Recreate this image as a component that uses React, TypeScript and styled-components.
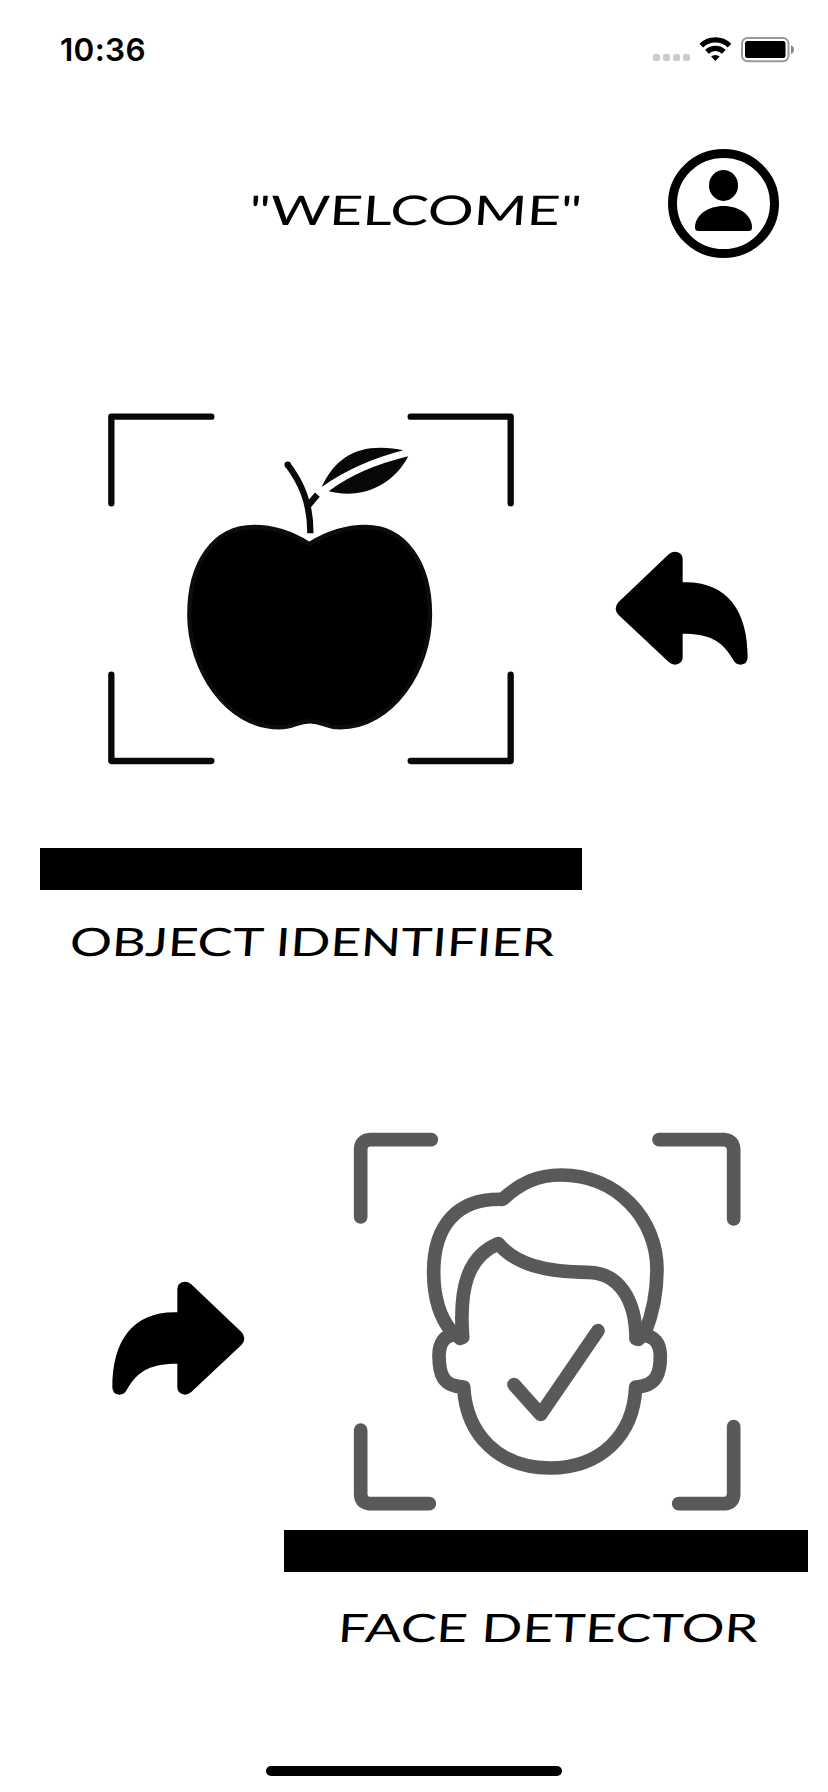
import React from "react";
import styled, { createGlobalStyle } from "styled-components";

const GlobalStyle = createGlobalStyle`
  * { box-sizing: border-box; }
  body { margin: 0; background: #fff; color: #000; }
`;

const Screen = styled.div`
  width: 828px;
  height: 1792px;
  display: flex;
  flex-direction: column;
  overflow: hidden;
  background: #fff;
`;

const StatusBar = styled.header`
  height: 88px;
  flex: none;
  display: flex;
  justify-content: space-between;
  align-items: flex-start;
  padding: 30px 33px 0 60px;
`;

const Clock = styled.time`
  font: 600 31.5px/40px Inter, sans-serif;
  letter-spacing: 0.3px;
`;

const Indicators = styled.svg`
  display: block;
  width: 145px;
  height: 40px;
`;

const TitleRow = styled.div`
  flex: none;
  height: 302px;
  padding: 60px 48px 0 249px;
  display: flex;
  justify-content: space-between;
  align-items: flex-start;
`;

const Handwritten = styled.span<{ $size: number; $stretch: number }>`
  display: block;
  width: max-content;
  font-family: "Bradley Hand", Lato, sans-serif;
  font-weight: 400;
  font-size: ${(p) => p.$size}px;
  line-height: 48px;
  white-space: nowrap;
  transform: scaleX(${(p) => p.$stretch}) skewX(-3deg);
  transform-origin: left center;
`;

const Title = styled.h1`
  margin: 38px 0 0;
`;

const ProfileButton = styled.button`
  border: 0;
  padding: 0;
  margin: 0;
  background: none;
  width: 113px;
  height: 111px;
`;

const Drawing = styled.svg<{ $w: number; $h: number }>`
  display: block;
  flex: none;
  width: ${(p) => p.$w}px;
  height: ${(p) => p.$h}px;
`;

const ObjectSection = styled.section`
  flex: none;
  height: 720px;
`;

const FaceSection = styled.section`
  flex: none;
  height: 656px;
`;

const FeatureRow = styled.div<{ $left: number; $gap: number; $height: number }>`
  display: flex;
  align-items: flex-start;
  height: ${(p) => p.$height}px;
  padding-left: ${(p) => p.$left}px;
  gap: ${(p) => p.$gap}px;
`;

const ArrowSlot = styled.div<{ $top: number }>`
  margin-top: ${(p) => p.$top}px;
`;

const Band = styled.div<{ $left: number; $width: number }>`
  height: 42px;
  width: ${(p) => p.$width}px;
  margin-left: ${(p) => p.$left}px;
  background: #000;
`;

const Caption = styled.h2<{ $left: number; $top: number }>`
  margin: ${(p) => p.$top}px 0 0 ${(p) => p.$left}px;
`;

const HomeIndicator = styled.div`
  width: 296px;
  height: 10px;
  border-radius: 5px;
  background: #000;
  align-self: center;
`;

const StatusIcons = () => (
  <Indicators viewBox="650 30 145 40">
    {[653, 663, 673, 683].map((x) => (
      <rect key={x} x={x} y="54" width="7" height="7" rx="2" fill="#cbcbcb" />
    ))}
    <g fill="none" stroke="#000" strokeWidth="5.2">
      <path d="M701.3 45.6a20.2 20.2 0 0 1 28.2 0" />
      <path d="M707 51.9a12 12 0 0 1 16.8 0" />
    </g>
    <path d="M715.4 61l-4.3-4.4a6.3 6.3 0 0 1 8.6 0z" />
    <rect x="742" y="38" width="46.5" height="23.2" rx="5.5" fill="none" stroke="#999" strokeWidth="2" />
    <rect x="745" y="41" width="40.5" height="17" rx="2.5" />
    <path d="M791 45.2c4 1.3 4 7.5 0 8.8z" fill="#888" />
  </Indicators>
);

const ProfileIcon = () => (
  <Drawing $w={113} $h={111} viewBox="667 148 113 111">
    <ellipse cx="723.5" cy="203.5" rx="51" ry="50" fill="none" stroke="#000" strokeWidth="9" />
    <ellipse cx="723.5" cy="185.4" rx="14.5" ry="15.5" />
    <path d="M695 227.5C695 215 708 206 723.5 206S752 215 752 227.5Q752 231 748.5 231H698.5Q695 231 695 227.5z" />
  </Drawing>
);

const AppleIcon = () => (
  <Drawing $w={440} $h={390} viewBox="0 0 1320 1170">
    <g fill="none" stroke="#080808" strokeWidth="19" strokeLinecap="round" strokeLinejoin="round">
      <path d="M64 340V80H364M962 80H1262V340M64 854V1113H364M962 1113H1262V854" />
    </g>
    <g fill="none" stroke="#080808" strokeWidth="19">
      <path d="M593 224C632 276 662 338 661 430" />
      <path d="M655 346L682 314" />
    </g>
    <circle cx="593" cy="224" r="9.5" />
    <path d="M695 291C732 212 787 173 872 173Q910 173 940 181Q800 217 695 291z" fill="#080808" />
    <path d="M716 304Q808 234 955 199C909 286 815 330 716 304z" fill="#080808" />
    <path
      d="M658 462C603 428 549 411 493 411C370 411 298 520 298 674C298 838 410 1012 567 1012C612 1012 620 994 660 994C700 994 704 1012 750 1012C907 1012 1020 838 1020 674C1020 520 945 411 826 411C769 411 714 428 658 462z"
      stroke="#0c0c0c"
      strokeWidth="13"
      strokeLinejoin="round"
    />
  </Drawing>
);

const FaceIcon = () => (
  <Drawing $w={420} $h={420} viewBox="0 0 1260 1260">
    <g fill="none" stroke="#58595b" strokeWidth="41" strokeLinecap="round" strokeLinejoin="round">
      <path d="M62 321V116Q64 92 88 89H274M957 89H1155Q1178 92 1181 116V327M62 960V1155Q64 1178 88 1181H268M1016 1181H1155Q1178 1178 1181 1155V950" />
      <path d="M336 666C297 620 281 563 281 486C281 345 352 264 488 268C541 219 593 195 663 195C833 195 951 329 951 478C951 550 940 607 914 670" />
      <path d="M368 682C357 535 382 440 475 401C526 462 612 486 744 487C834 487 888 567 888 686" />
      <path d="M350 675C314 671 297 700 297 738C298 789 305 829 371 831C379 976 478 1074 630 1074C782 1074 881 976 887 831C953 829 961 784 961 738C961 700 943 677 909 676" />
      <path d="M360 685L346 668M895 688L912 671" />
      <path d="M522 824L602 913L774 662" />
    </g>
  </Drawing>
);

const ReplyArrow = ({ flipped = false }: { flipped?: boolean }) => (
  <Drawing $w={134} $h={114} viewBox="76 64 402 342">
    <path
      transform={flipped ? "translate(554 0) scale(-1 1)" : undefined}
      d="M238 73Q246 66 257 66Q279 68 279 88V158C410 154 474 240 474 383Q473 405 453 405Q438 405 431 391C396 329 354 312 279 312V383Q279 403 257 405Q246 405 238 398L86 255Q70 237 86 218z"
    />
  </Drawing>
);

export default function App() {
  return (
    <Screen>
      <GlobalStyle />
      <StatusBar>
        <Clock>10:36</Clock>
        <StatusIcons />
      </StatusBar>
      <TitleRow>
        <Title>
          <Handwritten $size={41} $stretch={1.4}>"WELCOME"</Handwritten>
        </Title>
        <ProfileButton aria-label="Profile">
          <ProfileIcon />
        </ProfileButton>
      </TitleRow>
      <ObjectSection>
        <FeatureRow $left={90} $gap={85} $height={458}>
          <AppleIcon />
          <ArrowSlot $top={161}>
            <ReplyArrow />
          </ArrowSlot>
        </FeatureRow>
        <Band $left={40} $width={542} />
        <Caption $left={70} $top={27}>
          <Handwritten $size={39} $stretch={1.35}>OBJECT IDENTIFIER</Handwritten>
        </Caption>
      </ObjectSection>
      <FaceSection>
        <FeatureRow $left={111} $gap={95} $height={420}>
          <ArrowSlot $top={171}>
            <ReplyArrow flipped />
          </ArrowSlot>
          <FaceIcon />
        </FeatureRow>
        <Band $left={284} $width={524} />
        <Caption $left={338} $top={31}>
          <Handwritten $size={39} $stretch={1.38}>FACE DETECTOR</Handwritten>
        </Caption>
      </FaceSection>
      <HomeIndicator />
    </Screen>
  );
}
